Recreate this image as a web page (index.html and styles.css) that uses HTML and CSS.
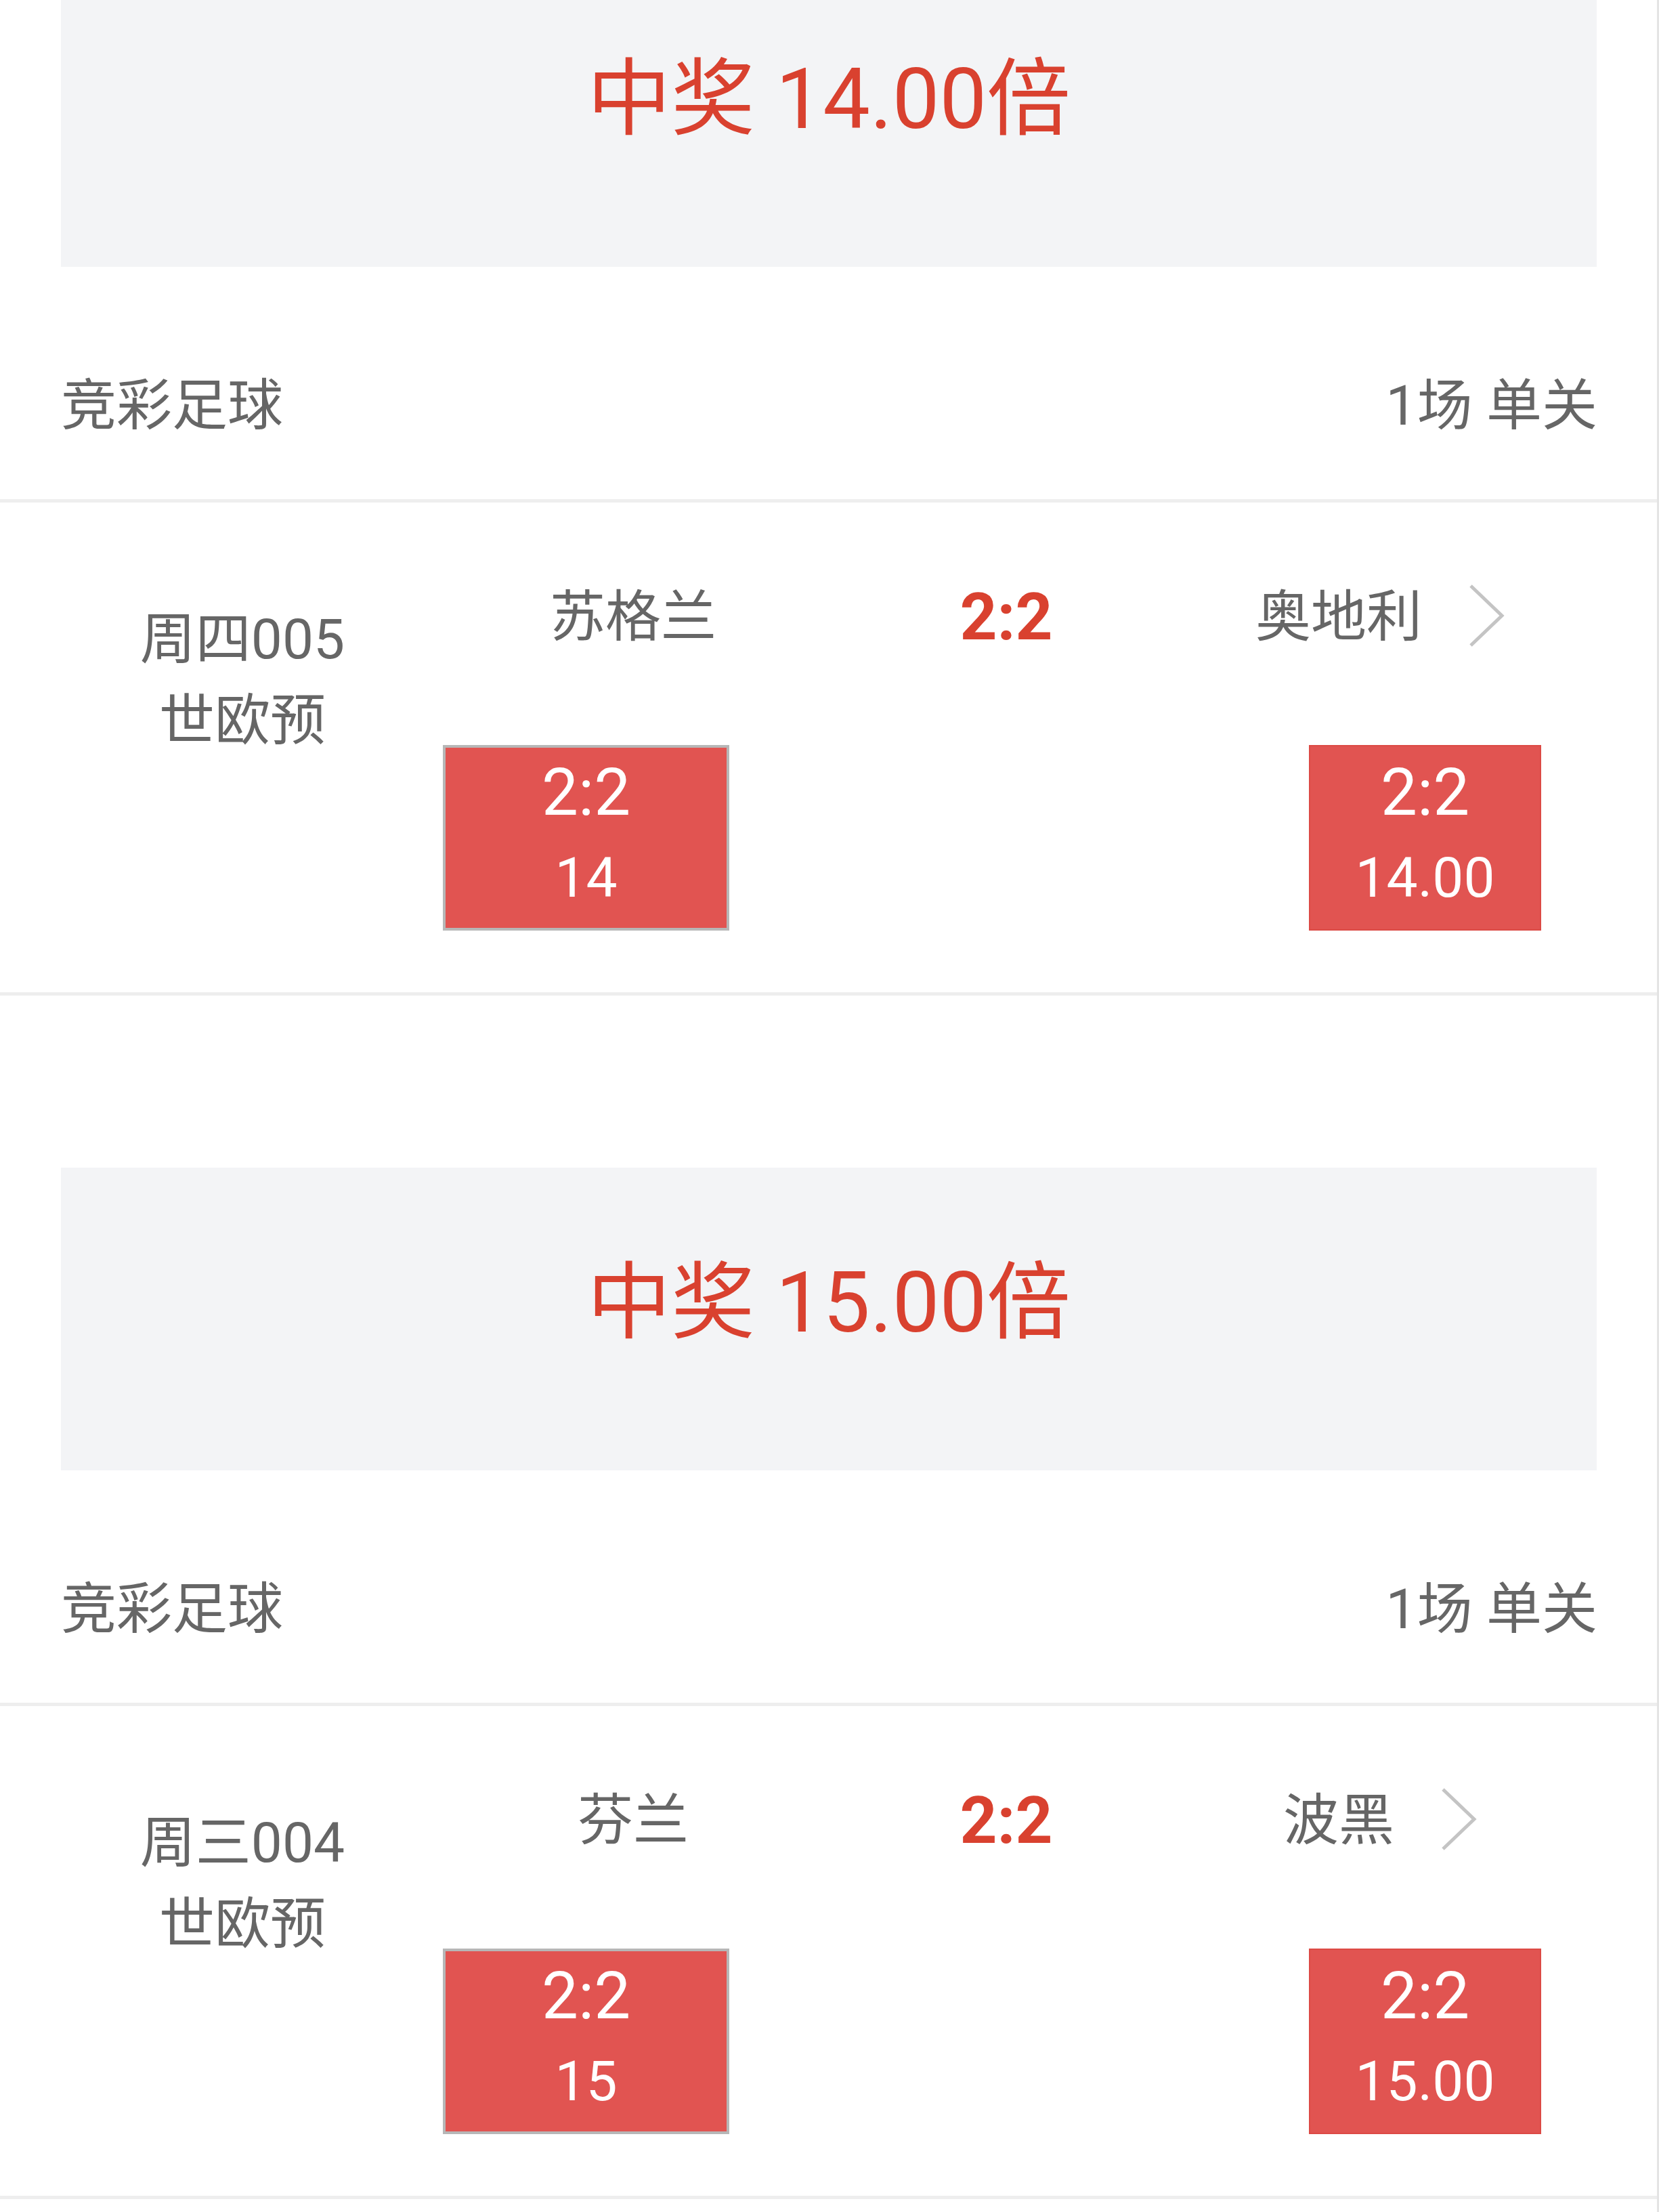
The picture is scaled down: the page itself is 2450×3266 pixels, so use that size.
FILE: index.html
```html
<!DOCTYPE html>
<html lang="zh-CN">
<head>
  <meta charset="UTF-8">
  <meta name="viewport" content="width=device-width, initial-scale=1.0">
  <title>中奖记录</title>
  <link rel="stylesheet" href="styles.css">
</head>
<body>
  <div class="page">
    <div class="cards">

      <div class="card">
        <div class="banner">中奖 14.00倍</div>
        <div class="card-head">
          <span>竞彩足球</span>
          <span>1场 单关</span>
        </div>
        <div class="match">
          <div class="match-info">
            <div>周四005</div>
            <div>世欧预</div>
          </div>
          <div class="match-main">
            <div class="teams">
              <span class="team">苏格兰</span>
              <span class="score">2:2</span>
              <span class="team"><span class="team-name">奥地利<svg class="chevron" viewBox="0 0 54 96"><path d="M4 4 L50 48 L4 92" /></svg></span></span>
            </div>
            <div class="picks">
              <div class="pick pick-mine">
                <div class="pick-result">2:2</div>
                <div class="pick-odds">14</div>
              </div>
              <div class="pick pick-final">
                <div class="pick-result">2:2</div>
                <div class="pick-odds">14.00</div>
              </div>
            </div>
          </div>
        </div>
      </div>

      <div class="card">
        <div class="banner">中奖 15.00倍</div>
        <div class="card-head">
          <span>竞彩足球</span>
          <span>1场 单关</span>
        </div>
        <div class="match">
          <div class="match-info">
            <div>周三004</div>
            <div>世欧预</div>
          </div>
          <div class="match-main">
            <div class="teams">
              <span class="team">芬兰</span>
              <span class="score">2:2</span>
              <span class="team"><span class="team-name">波黑<svg class="chevron" viewBox="0 0 54 96"><path d="M4 4 L50 48 L4 92" /></svg></span></span>
            </div>
            <div class="picks">
              <div class="pick pick-mine">
                <div class="pick-result">2:2</div>
                <div class="pick-odds">15</div>
              </div>
              <div class="pick pick-final">
                <div class="pick-result">2:2</div>
                <div class="pick-odds">15.00</div>
              </div>
            </div>
          </div>
        </div>
      </div>

    </div>
  </div>
</body>
</html>
```

FILE: styles.css
```css
body {
  margin: 0;
  background-color: #fff;
  font-family: Roboto, "Noto Sans CJK SC", sans-serif;
  color: #666;
}
.page {
  border-right: 3px solid #e4e4e4;
  overflow: hidden;
  height: 3266px;
}
.cards {
  margin-top: -53px;
}
.card {
  margin-bottom: 254px;
}
.banner {
  height: 447px;
  box-sizing: border-box;
  margin: 0 89px 0 90px;
  padding-top: 138px;
  background-color: #f3f4f6;
  color: #d9412f;
  font-size: 124px;
  line-height: 124px;
  text-align: center;
}
.card-head {
  height: 348px;
  box-sizing: border-box;
  padding: 52px 88px 0 90px;
  display: flex;
  align-items: center;
  justify-content: space-between;
  font-size: 82px;
  border-bottom: 5px solid #eeeeee;
}
.match {
  display: grid;
  grid-template-columns: 600px 1fr;
  border-bottom: 5px solid #eeeeee;
}
.match-info {
  padding: 142px 0 0 116px;
  font-size: 82px;
  line-height: 120px;
  text-align: center;
}
.match-main {
  padding: 109px 0 91px;
}
.teams {
  display: grid;
  grid-template-columns: 670px 432px 550px 1fr;
  height: 120px;
  line-height: 120px;
  font-size: 82px;
  text-align: center;
}
.score {
  color: #d9412f;
  font-size: 96px;
  font-weight: bold;
}
.team-name {
  position: relative;
}
.chevron {
  position: absolute;
  left: calc(100% + 68px);
  top: 50%;
  width: 54px;
  height: 96px;
  margin-top: -50px;
  fill: none;
  stroke: #c4c4c4;
  stroke-width: 5;
}
.picks {
  display: flex;
  justify-content: space-between;
  margin-top: 129px;
  padding: 0 171px 0 54px;
}
.pick {
  height: 274px;
  box-sizing: border-box;
  padding-bottom: 8px;
  display: flex;
  flex-direction: column;
  justify-content: center;
  align-items: center;
  background-color: #e15451;
  color: #fff;
  line-height: 126px;
}
.pick-mine {
  width: 423px;
  border: 4px solid #b7b7b7;
}
.pick-final {
  width: 343px;
  border: 2px solid #dc4a45;
}
.pick-result {
  font-size: 96px;
}
.pick-odds {
  font-size: 82px;
}
```
